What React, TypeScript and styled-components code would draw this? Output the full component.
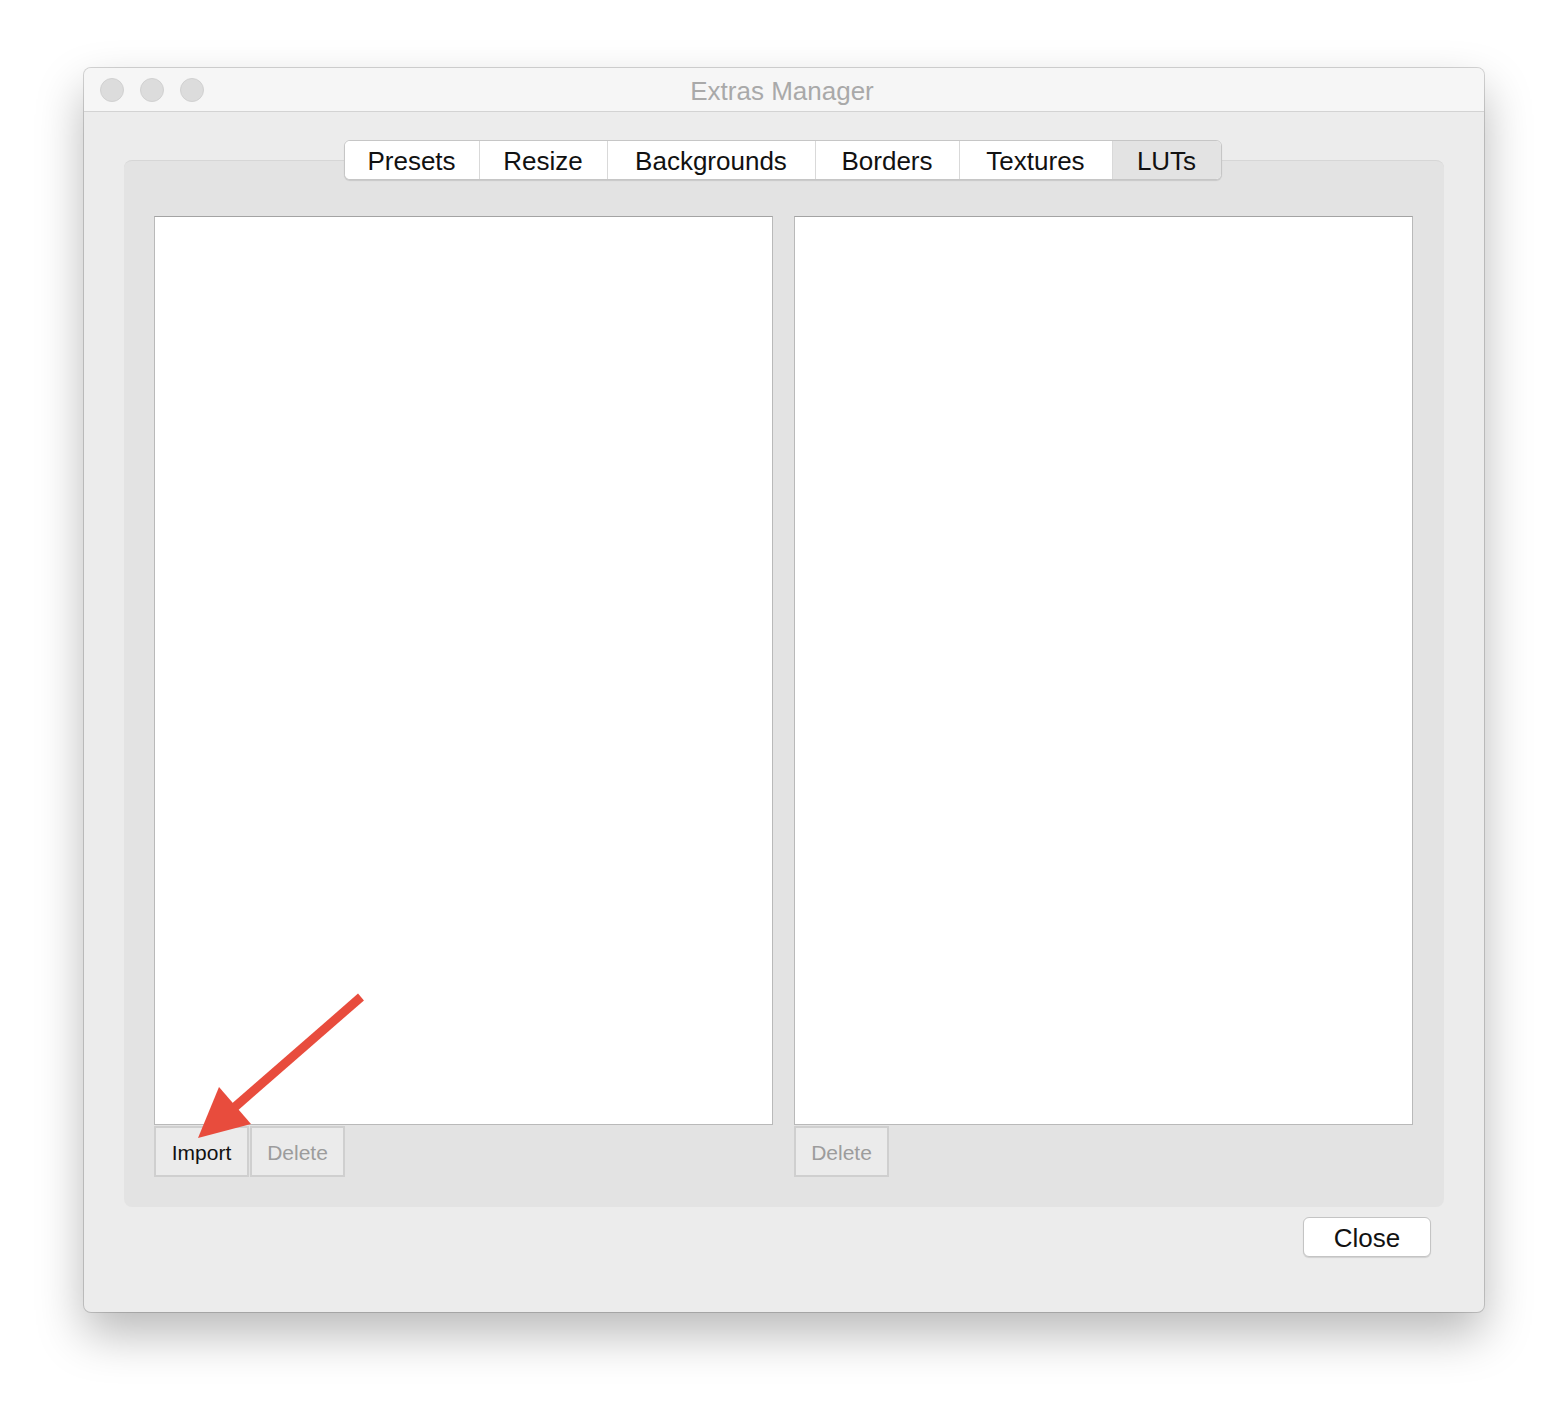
import styled, { createGlobalStyle } from 'styled-components'

const Global = createGlobalStyle`
  html, body {
    margin: 0;
    padding: 0;
    background: #ffffff;
  }
  body {
    font-family: "Liberation Sans", Arial, sans-serif;
  }
`

const Page = styled.div`
  width: 1568px;
  height: 1412px;
  padding: 68px 84px 0;
  box-sizing: border-box;
`

const Window = styled.div`
  width: 1400px;
  height: 1244px;
  display: flex;
  flex-direction: column;
  background: #ececec;
  border-radius: 7px;
  overflow: hidden;
  box-shadow: 0 0 0 1px rgba(0, 0, 0, 0.16), 0 22px 48px rgba(0, 0, 0, 0.28);
`

const TitleBar = styled.div`
  height: 43px;
  flex: none;
  display: grid;
  grid-template-columns: 1fr auto 1fr;
  align-items: center;
  padding: 0 16px;
  background: #f6f6f6;
  border-bottom: 1px solid #d3d3d3;
`

const Lights = styled.div`
  display: flex;
  gap: 16px;
  padding-top: 1px;
`

const Light = styled.span`
  width: 24px;
  height: 24px;
  border-radius: 50%;
  background: #dcdcdc;
  border: 1px solid #d1d1d1;
  box-sizing: border-box;
`

const Title = styled.div`
  font-size: 26px;
  color: #a9a9a9;
  padding-top: 3px;
  margin-left: -4px;
`

const Body = styled.div`
  flex: 1;
  display: flex;
  flex-direction: column;
  padding: 48px 40px 0;
`

const TabBox = styled.div`
  height: 1047px;
  box-sizing: border-box;
  background: #e3e3e3;
  border-top: 1px solid #d6d6d6;
  border-radius: 8px;
  display: flex;
  flex-direction: column;
  padding: 0 31px 0 30px;
`

const TabRow = styled.div`
  display: flex;
  justify-content: center;
  margin-top: -21px;
  margin-left: -2px;
`

const Tabs = styled.div`
  display: flex;
  height: 40px;
  box-sizing: border-box;
  background: #ffffff;
  border: 1px solid #c6c6c6;
  border-radius: 6px;
  overflow: hidden;
  box-shadow: 0 1px 1px rgba(0, 0, 0, 0.12);
`

const Tab = styled.div<{ $w: number; $active?: boolean }>`
  width: ${(p) => p.$w}px;
  box-sizing: border-box;
  display: flex;
  align-items: center;
  justify-content: center;
  padding-top: 2px;
  font-size: 26px;
  color: #111;
  background: ${(p) => (p.$active ? '#e3e3e3' : '#ffffff')};
  & + & {
    border-left: 1px solid #d9d9d9;
  }
`

const Columns = styled.div`
  display: grid;
  grid-template-columns: 619px 619px;
  gap: 21px;
  margin-top: 36px;
`

const Column = styled.div`
  position: relative;
  display: flex;
  flex-direction: column;
`

const List = styled.div`
  height: 909px;
  box-sizing: border-box;
  background: #ffffff;
  border: 1px solid #b9b9b9;
  border-top-color: #a3a3a3;
`

const Buttons = styled.div`
  display: flex;
  gap: 1px;
  margin-top: 1px;
`

const SmallButton = styled.div<{ $disabled?: boolean }>`
  width: 95px;
  height: 51px;
  box-sizing: border-box;
  display: flex;
  align-items: center;
  justify-content: center;
  background: #ebebeb;
  border: 2px solid #cfcfcf;
  font-size: 21px;
  padding-top: 2px;
  color: ${(p) => (p.$disabled ? '#9c9c9c' : '#111')};
`

const Footer = styled.div`
  display: flex;
  justify-content: flex-end;
  padding: 10px 13px 0 0;
`

const CloseButton = styled.div`
  width: 128px;
  height: 40px;
  box-sizing: border-box;
  display: flex;
  align-items: center;
  justify-content: center;
  padding-top: 2px;
  background: #ffffff;
  border: 1px solid #c4c4c4;
  border-radius: 6px;
  box-shadow: 0 1px 1px rgba(0, 0, 0, 0.12);
  font-size: 26px;
  color: #111;
`

const Arrow = styled.svg`
  position: absolute;
  left: 30px;
  top: 770px;
  width: 180px;
  height: 180px;
  overflow: visible;
`

const tabs = [
  { label: 'Presets', w: 134 },
  { label: 'Resize', w: 128 },
  { label: 'Backgrounds', w: 208 },
  { label: 'Borders', w: 144 },
  { label: 'Textures', w: 153 },
  { label: 'LUTs', w: 109, active: true },
]

const App = () => {
  return (
    <Page>
      <Global />
      <Window>
        <TitleBar>
          <Lights>
            <Light />
            <Light />
            <Light />
          </Lights>
          <Title>Extras Manager</Title>
          <div />
        </TitleBar>
        <Body>
          <TabBox>
            <TabRow>
              <Tabs>
                {tabs.map((t) => (
                  <Tab key={t.label} $w={t.w} $active={t.active}>
                    {t.label}
                  </Tab>
                ))}
              </Tabs>
            </TabRow>
            <Columns>
              <Column>
                <List />
                <Buttons>
                  <SmallButton>Import</SmallButton>
                  <SmallButton $disabled>Delete</SmallButton>
                </Buttons>
                {/* viewBox uses page coordinates */}
                <Arrow viewBox="184 986 180 180">
                  <line x1="361" y1="997" x2="228" y2="1113" stroke="#e84c3d" strokeWidth="9" />
                  <polygon points="198,1138 219,1087 251,1124" fill="#e84c3d" />
                </Arrow>
              </Column>
              <Column>
                <List />
                <Buttons>
                  <SmallButton $disabled>Delete</SmallButton>
                </Buttons>
              </Column>
            </Columns>
          </TabBox>
          <Footer>
            <CloseButton>Close</CloseButton>
          </Footer>
        </Body>
      </Window>
    </Page>
  )
}

export default App
